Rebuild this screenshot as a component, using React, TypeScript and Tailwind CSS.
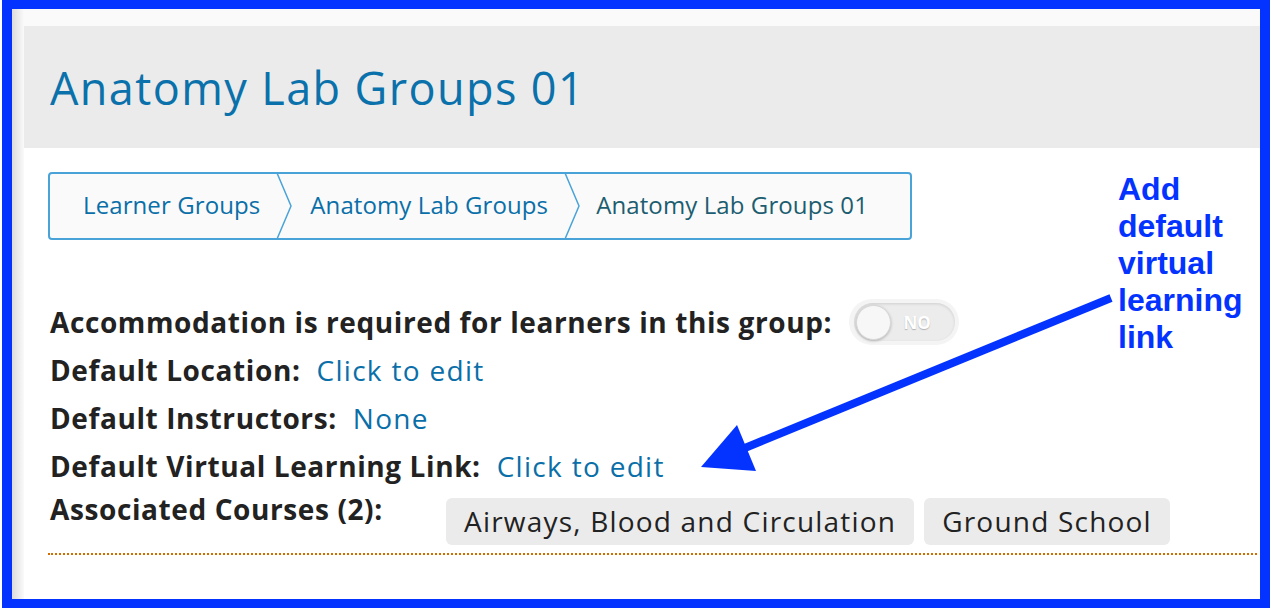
import React from 'react'

const crumbs = ['Learner Groups', 'Anatomy Lab Groups', 'Anatomy Lab Groups 01']

function Chevron() {
  return (
    <svg width="18" height="66" viewBox="0 0 18 66" className="shrink-0">
      <path d="M1 0 L15 33 L1 66" fill="none" stroke="#4aa3d8" strokeWidth="1.5" />
    </svg>
  )
}

function Toggle() {
  return (
    <div className="ml-[17px] flex h-[46px] w-[110px] items-center justify-center rounded-full bg-[#f4f4f4]">
      <div className="relative flex h-[38px] w-[101px] items-center rounded-full bg-[#ececec] shadow-[inset_0_1px_3px_rgba(0,0,0,0.12)]">
        <div className="ml-[2px] h-[35px] w-[35px] rounded-full border border-[#d8d8d8] bg-[#f7f7f7] shadow-[0_1px_3px_rgba(0,0,0,0.25)]" />
        <span className="ml-[13px] text-[17px] font-bold leading-none tracking-normal text-white [text-shadow:0_1px_1px_rgba(0,0,0,0.25)]">
          NO
        </span>
      </div>
    </div>
  )
}

function Row({ label, children }: { label: string; children?: React.ReactNode }) {
  return (
    <div className="flex h-[48px] items-center">
      <span className="font-bold tracking-[0.6px] text-[#222]">{label}</span>
      {children}
    </div>
  )
}

function Value({ text }: { text: string }) {
  return <span className="ml-[16px] tracking-[1.3px] text-[#0a6fa8]">{text}</span>
}

export default function App() {
  return (
    <div className="relative h-[608px] w-[1272px] bg-white font-['Open_Sans',sans-serif]">
      <div className="ml-[2px] flex h-[608px] w-[1268px] border-b-[9px] border-l-[10px] border-r-[10px] border-t-[9px] border-[#0433ff]">
        <div className="w-[12px] bg-gradient-to-r from-[#dcdcdc] to-[#fafafa]" />
        <div className="flex flex-1 flex-col bg-white">
          <div className="h-[17px] bg-[#fafafa]" />
          <div className="flex h-[122px] items-center bg-[#ebebeb] pl-[26px]">
            <h1 className="text-[45px] leading-none tracking-[1.4px] text-[#0a71ab]">Anatomy Lab Groups 01</h1>
          </div>

          <div className="pl-[24px] pr-[3px] pt-[24px]">
            <nav className="flex h-[68px] w-[864px] items-center rounded-[4px] border-2 border-[#4aa3d8] bg-[#fafafa] pl-[33px] text-[24px] tracking-[0.1px]">
              {crumbs.map((c, i) => (
                <React.Fragment key={c}>
                  {i > 0 && <Chevron />}
                  <span
                    className={
                      i === crumbs.length - 1
                        ? 'mx-[14px] -translate-y-px text-[#1c5d70]'
                        : i === 0
                          ? 'mr-[16px] -translate-y-px text-[#0a6fa8]'
                          : 'mx-[16px] -translate-y-px text-[#0a6fa8]'
                    }
                  >
                    {c}
                  </span>
                </React.Fragment>
              ))}
            </nav>

            <div className="mt-[58px] pl-[2px] text-[28px]">
              <Row label="Accommodation is required for learners in this group:">
                <Toggle />
              </Row>
              <Row label="Default Location:">
                <Value text="Click to edit" />
              </Row>
              <Row label="Default Instructors:">
                <Value text="None" />
              </Row>
              <Row label="Default Virtual Learning Link:">
                <Value text="Click to edit" />
              </Row>
              <div className="flex items-start">
                <span className="w-[396px] font-bold leading-[38px] tracking-[0.6px] text-[#222]">Associated Courses (2):</span>
                <div className="mt-[8px] flex gap-[10px] tracking-[1.2px]">
                  <span className="flex h-[47px] items-center rounded-[6px] bg-[#ebebeb] px-[18px] pb-[2px] text-[#222]">
                    Airways, Blood and Circulation
                  </span>
                  <span className="flex h-[47px] items-center rounded-[6px] bg-[#ebebeb] px-[18px] pb-[2px] text-[#222]">
                    Ground School
                  </span>
                </div>
              </div>
            </div>
            <div className="mt-[8px] border-b-2 border-dotted border-[#d06d00]" />
          </div>
        </div>
      </div>

      <div className="absolute left-[1118px] top-[171px] font-['Liberation_Sans',Arial,sans-serif] text-[32px] font-bold leading-[37px] text-[#0433ff]">
        Add
        <br />
        default
        <br />
        virtual
        <br />
        learning
        <br />
        link
      </div>

      <svg className="absolute left-0 top-0" width="1272" height="608" viewBox="0 0 1272 608">
        <line x1="1111" y1="298" x2="740" y2="450" stroke="#0433ff" strokeWidth="8" />
        <polygon points="701,467 737,425 756,471" fill="#0433ff" />
      </svg>
    </div>
  )
}
